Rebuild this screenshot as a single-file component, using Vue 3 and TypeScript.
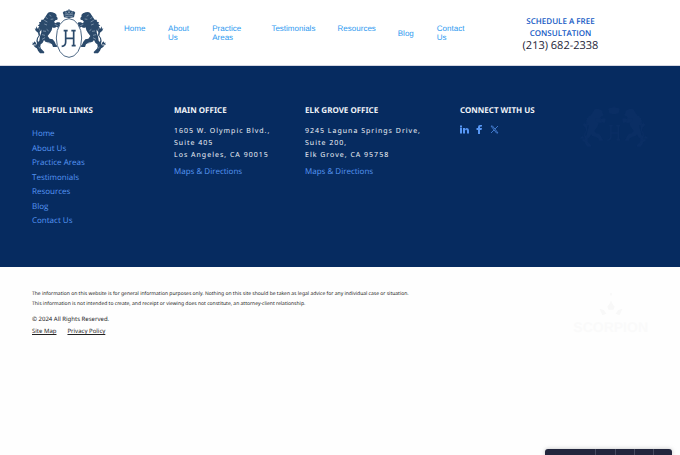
<script setup lang="ts">
interface Office {
  name: string
  lines: string[]
}

const navItems: string[][] = [
  ['Home'],
  ['About', 'Us'],
  ['Practice', 'Areas'],
  ['Testimonials'],
  ['Resources'],
  ['Blog'],
  ['Contact', 'Us'],
]

const helpfulLinks: string[] = [
  'Home',
  'About Us',
  'Practice Areas',
  'Testimonials',
  'Resources',
  'Blog',
  'Contact Us',
]

const offices: Office[] = [
  { name: 'Main Office', lines: ['1605 W. Olympic Blvd.,', 'Suite 405', 'Los Angeles, CA 90015'] },
  { name: 'Elk Grove Office', lines: ['9245 Laguna Springs Drive,', 'Suite 200,', 'Elk Grove, CA 95758'] },
]
</script>

<template>
  <svg class="symbols" aria-hidden="true">
    <symbol id="lion" viewBox="36 34 84 140">
      <path d="M84 38l6-2 7 1 8 3 5 5-1 4 4 5-1 5-6 2-4 5 5 4 4-3 8 0 2 5-3 5 2 3-6 3-4-3-5 3-8-1-2 9-5 8-7 9 6 8 9 2 6 7 4 9 4 3-2 4-11 0-3-8-8-5-12-3-4-5-4 8-7 6 0 10 6 6 6 6-1 4-12 0-6-8-5-12 1-9 8-9 2-13 4-12 0-8-6 2 1-6-5 0 4-6-5-2 6-5-2-5 6-2 1-6 6 0z" />
      <path d="M85 66l16 4 6 8-5 5-16-6z" />
      <path d="M64 150l-10-3-10-6-4-7 6 3 1-7 5 8 9 4zM61 138l-9-6-3-9 2-9 5-7-2-9-7-6-3-8 4 3 1-8 4 7 7-4-2 9 6-2-5 7 1 10-6 9-1 8 7 8z" />
      <path d="M42 124l7 5-2 4-11 2 3-4-3-3 6 0z" />
    </symbol>
    <symbol id="crown" viewBox="0 0 40 28">
      <path d="M5 25L3 15 1 11l4-4 6 0 3-3 4 1 0-3 2-2 2 2 0 3 4-1 3 3 6 0 4 4-2 4-2 10-15 2z" />
    </symbol>
  </svg>

  <header class="site-header">
    <a class="logo" href="#" aria-label="Home page">
      <svg viewBox="36 24 222 150">
        <use href="#lion" x="36" y="34" width="84" height="140" />
        <g transform="translate(294 0) scale(-1 1)">
          <use href="#lion" x="36" y="34" width="84" height="140" />
        </g>
        <g class="fur">
          <path d="M76 50l7 7M73 61l9 5M73 72l8 3M88 45l6 4M92 58l8-1M69 93l9 1M66 104l9 2M80 88l6 5M66 118l9-5M80 127l10 3M56 140l4 6M104 73l9 4" />
          <path d="M218 50l-7 7M221 61l-9 5M221 72l-8 3M206 45l-6 4M202 58l-8-1M225 93l-9 1M228 104l-9 2M214 88l-6 5M228 118l-9-5M214 127l-10 3M238 140l-4 6M190 73l-9 4" />
        </g>
        <ellipse class="shield" cx="147" cy="114" rx="38" ry="58" />
        <use href="#crown" x="127" y="27" width="40" height="28" />
        <path class="fur" d="M134 45q13-5 26 0M135 40l4-3 3 5M145 39l2-5 2 5M152 42l3-5 4 3M136 50q11-3 22 0" />
        <path class="letter" d="M137 92v34q0 12-12 13M161 92v45M131 92h12M154 92h13M137 115h24M155 137h12" />
      </svg>
    </a>
    <nav class="main-nav" aria-label="Main">
      <a v-for="item in navItems" :key="item[0]" href="#" :class="{ low: item[0] === 'Blog' }">
        <span v-for="word in item" :key="word">{{ word }} </span>
      </a>
    </nav>
    <div class="consult">
      <a href="#">SCHEDULE A FREE CONSULTATION</a>
      <a class="phone" href="#">(213) 682-2338</a>
    </div>
  </header>

  <section class="info">
    <div class="col">
      <h2>Helpful Links</h2>
      <ul>
        <li v-for="link in helpfulLinks" :key="link"><a href="#">{{ link }}</a></li>
      </ul>
    </div>
    <div v-for="office in offices" :key="office.name" class="col">
      <h2>{{ office.name }}</h2>
      <address><span v-for="line in office.lines" :key="line">{{ line }}</span></address>
      <a href="#">Maps &amp; Directions</a>
    </div>
    <div class="col">
      <h2>Connect With Us</h2>
      <div class="social">
        <a href="#" aria-label="LinkedIn">
          <svg viewBox="0 0 18 18"><path d="M0 6h4v11H0zM0 1h4v4H0zM6 6h4v2q2-2 4-2 4 0 4 5v6h-4v-5q0-3-2-3t-2 3v5H6z" /></svg>
        </a>
        <a href="#" aria-label="Facebook">
          <svg viewBox="0 0 18 18"><path d="M6 18v-8H3V6h3V4q0-4 4-4h4v3h-2q-2 0-2 2v1h4l-1 4h-3v8z" /></svg>
        </a>
        <a class="x-link" href="#" aria-label="X">
          <svg viewBox="0 0 18 18"><path class="line" d="M2 2h3l11 14h-3zM16 2l-6 6M8 10l-6 6" /></svg>
        </a>
      </div>
    </div>
    <svg class="crest" viewBox="36 24 222 150" aria-hidden="true">
      <use href="#lion" x="36" y="34" width="84" height="140" />
      <g transform="translate(294 0) scale(-1 1)">
        <use href="#lion" x="36" y="34" width="84" height="140" />
      </g>
      <use href="#crown" x="127" y="27" width="40" height="28" />
      <path class="letter" d="M137 92v34q0 12-12 13M161 92v45M131 92h12M154 92h13M137 115h24M155 137h12" />
    </svg>
  </section>

  <footer class="legal">
    <div class="legal-text">
      <p class="notice">The information on this website is for general information purposes only. Nothing on this site should be taken as legal advice for any individual case or situation.</p>
      <p class="notice">This information is not intended to create, and receipt or viewing does not constitute, an attorney-client relationship.</p>
      <p class="rights">© 2024 All Rights Reserved.</p>
      <div class="policy"><a href="#">Site Map</a><a href="#">Privacy Policy</a></div>
    </div>
    <div class="maker">
      <svg viewBox="0 0 72 70" aria-hidden="true"><path d="M32 1h8l-4 9zM36 22q1 8 11 20l-3 9H28l-3-9q10-12 11-20zM1 48l13 4 8 11-12 5zM71 48l-13 4-8 11 12 5z" /></svg>
      <span>SCORPION</span>
    </div>
  </footer>

  <div class="widget" aria-hidden="true"><i></i><i></i><i></i><i></i><i></i></div>
</template>

<style>
body {
  background: #fefefe;
  text-rendering: geometricPrecision;
}
</style>

<style scoped>
a {
  color: inherit;
  text-decoration: none;
}
h2,
p,
ul {
  margin: 0;
  padding: 0;
}
.symbols {
  position: absolute;
  width: 0;
  height: 0;
}
.site-header {
  display: flex;
  align-items: flex-start;
  box-sizing: border-box;
  min-height: 66px;
  padding: 8px 32px 0;
  border-bottom: 1px solid #d5d7e2;
  background: #fff;
}
.logo {
  flex: none;
  width: 74px;
}
.logo svg {
  display: block;
  width: 100%;
  height: 50px;
  fill: #2b4a6b;
}
.fur {
  fill: none;
  stroke: #9fb1c3;
  stroke-width: 2;
}
.shield {
  fill: #fff;
  stroke: #4d6885;
  stroke-width: 3;
}
.letter {
  fill: none;
  stroke: #2b4a6b;
  stroke-width: 5;
}
.main-nav {
  flex: 341 1 0;
  display: grid;
  grid-template-columns: 20fr 20fr 35fr 42fr 36fr 15fr 28fr;
  column-gap: 24px;
  margin-left: 18px;
  padding-top: 16px;
  font: 8px/9px "Liberation Sans", Arial, sans-serif;
  color: #2e9af0;
}
.main-nav a {
  min-width: 0;
}
.main-nav span {
  display: block;
}
.main-nav .low {
  align-self: center;
}
.consult {
  display: flex;
  flex-direction: column;
  align-items: center;
  flex: 175 1 0;
  margin-left: 8px;
  padding-top: 8px;
  text-align: center;
  font: 600 8px/12px "Open Sans", sans-serif;
  color: #1459c4;
}
.consult a {
  max-width: 80px;
}
.consult .phone {
  font-size: 11px;
  font-weight: 400;
  white-space: nowrap;
  color: #1c1c36;
}
.info {
  display: grid;
  grid-template-columns: minmax(0, 142fr) minmax(0, 131fr) minmax(0, 155fr) minmax(0, 120fr) 68px;
  align-items: start;
  box-sizing: border-box;
  min-height: 201px;
  padding: 39px 32px 0;
  background: #062b60;
  color: #f0f3f8;
  font: 8px/12px "Open Sans", sans-serif;
}
h2 {
  font: 700 8px/12px "Noto Sans", "Open Sans", sans-serif;
  text-transform: uppercase;
  white-space: nowrap;
}
.col a {
  color: #5797f5;
}
ul {
  display: flex;
  flex-direction: column;
  justify-content: space-between;
  height: 99px;
  margin-top: 11px;
  list-style: none;
}
address {
  margin: 9px 0 4px;
  font: 7px/12px "Noto Sans", "Open Sans", sans-serif;
  letter-spacing: 1px;
}
address span {
  display: block;
  white-space: nowrap;
}
.social {
  display: flex;
  gap: 6px;
  margin-top: 8px;
}
.social svg {
  display: block;
  width: 9px;
  height: 9px;
  fill: #5797f5;
}
.x-link {
  opacity: 0.7;
}
.line {
  fill: none;
  stroke: #5797f5;
  stroke-width: 2;
}
.crest {
  width: 68px;
  height: 46px;
  fill: #0a2e64;
}
.crest .letter {
  stroke: #0a2e64;
}
.legal {
  display: flex;
  justify-content: space-between;
  padding: 22px 32px 0;
  color: #222;
  font: 6px/12px "Noto Sans", "Open Sans", sans-serif;
}
.notice {
  font-size: 5px;
  line-height: 10px;
}
.rights {
  margin-top: 4px;
}
.policy {
  display: flex;
  gap: 11px;
}
.policy a {
  text-decoration: underline;
}
.maker {
  display: flex;
  flex-direction: column;
  align-items: center;
  gap: 3px;
  padding-top: 4px;
  color: #fafafa;
  font: 700 14px/16px "Liberation Sans", Arial, sans-serif;
}
.maker svg {
  width: 24px;
  height: 23px;
  fill: #f8f8f8;
}
.widget {
  position: fixed;
  right: 8px;
  bottom: 0;
  display: grid;
  grid-template-columns: 50fr 19fr 19fr 19fr 19fr;
  width: 127px;
  height: 6px;
  border-radius: 3px 3px 0 0;
  background: #22263d;
  box-shadow: 0 0 4px #9999;
}
.widget i + i {
  border-left: 1px solid #464a60;
}
</style>
